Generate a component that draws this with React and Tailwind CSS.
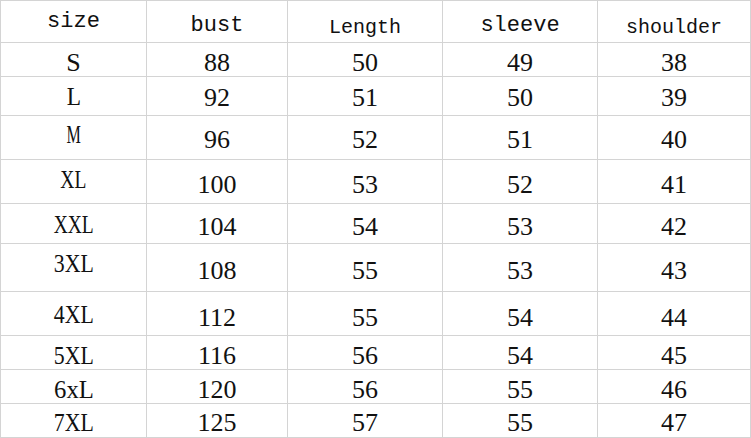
const cols = ['w-[146px]', 'w-[141px]', 'w-[155px]', 'w-[155px]', 'flex-1']

const headers = [
  { label: 'size', cls: 'text-[22px] pt-[10px]' },
  { label: 'bust', cls: 'text-[22px] pt-[14px]' },
  { label: 'Length', cls: 'text-[20px] pt-[16px]' },
  { label: 'sleeve', cls: 'text-[22px] pt-[14px]' },
  { label: 'shoulder', cls: 'text-[20px] pt-[16px]' },
]

const rows = [
  { h: 'h-[34px]', s: 'pt-[6px]', v: 'pt-[6px]', size: 'S', sx: '', vals: [88, 50, 49, 38] },
  { h: 'h-[39px]', s: 'pt-[2px]', v: 'pt-[3px]', size: 'L', sx: 'scale-x-90', vals: [92, 51, 50, 39] },
  { h: 'h-[44px]', s: 'pb-[6px]', v: 'pt-[4px]', size: 'M', sx: 'scale-x-[0.62]', vals: [96, 52, 51, 40] },
  { h: 'h-[44px]', s: 'pb-[3px]', v: 'pt-[6px]', size: 'XL', sx: 'scale-x-75', vals: [100, 53, 52, 41] },
  { h: 'h-[40px]', s: 'pt-[2px]', v: 'pt-[6px]', size: 'XXL', sx: 'scale-x-75', vals: [104, 54, 53, 42] },
  { h: 'h-[48px]', s: 'pb-[8px]', v: 'pt-[6px]', size: '3XL', sx: 'scale-x-[0.84]', vals: [108, 55, 53, 43] },
  { h: 'h-[44px]', s: 'pt-[2px]', v: 'pt-[8px]', size: '4XL', sx: 'scale-x-[0.84]', vals: [112, 55, 54, 44] },
  { h: 'h-[34px]', s: 'pt-[7px]', v: 'pt-[7px]', size: '5XL', sx: 'scale-x-[0.84]', vals: [116, 56, 54, 45] },
  { h: 'h-[34px]', s: 'pt-[6px]', v: 'pt-[6px]', size: '6xL', sx: 'scale-x-95', vals: [120, 56, 55, 46] },
  { h: 'h-[33px]', s: 'pt-[5px]', v: 'pt-[5px]', size: '7XL', sx: 'scale-x-[0.84]', vals: [125, 57, 55, 47] },
]

export default function App() {
  return (
    <div className="w-[751px] h-[438px] bg-white text-[#111] border border-[#d4d4d4] flex flex-col">
      <div className="h-[42px] flex border-b border-[#d4d4d4] font-['Liberation_Mono',monospace] leading-[22px]">
        {headers.map((hd, i) => (
          <div
            key={hd.label}
            className={`${cols[i]} ${i < 4 ? 'border-r border-[#d4d4d4]' : ''} flex justify-center items-start ${hd.cls}`}
          >
            {hd.label}
          </div>
        ))}
      </div>

      {rows.map((r, ri) => (
        <div
          key={r.size}
          className={`${r.h} flex ${ri < rows.length - 1 ? 'border-b border-[#d4d4d4]' : ''} font-['Liberation_Serif',serif] text-[26px] leading-[26px]`}
        >
          <div className={`${cols[0]} border-r border-[#d4d4d4] flex justify-center items-center ${r.s}`}>
            <span className={`inline-block ${r.sx}`}>{r.size}</span>
          </div>
          {r.vals.map((v, i) => (
            <div
              key={i}
              className={`${cols[i + 1]} ${i < 3 ? 'border-r border-[#d4d4d4]' : ''} flex justify-center items-center ${r.v}`}
            >
              {v}
            </div>
          ))}
        </div>
      ))}
    </div>
  )
}
